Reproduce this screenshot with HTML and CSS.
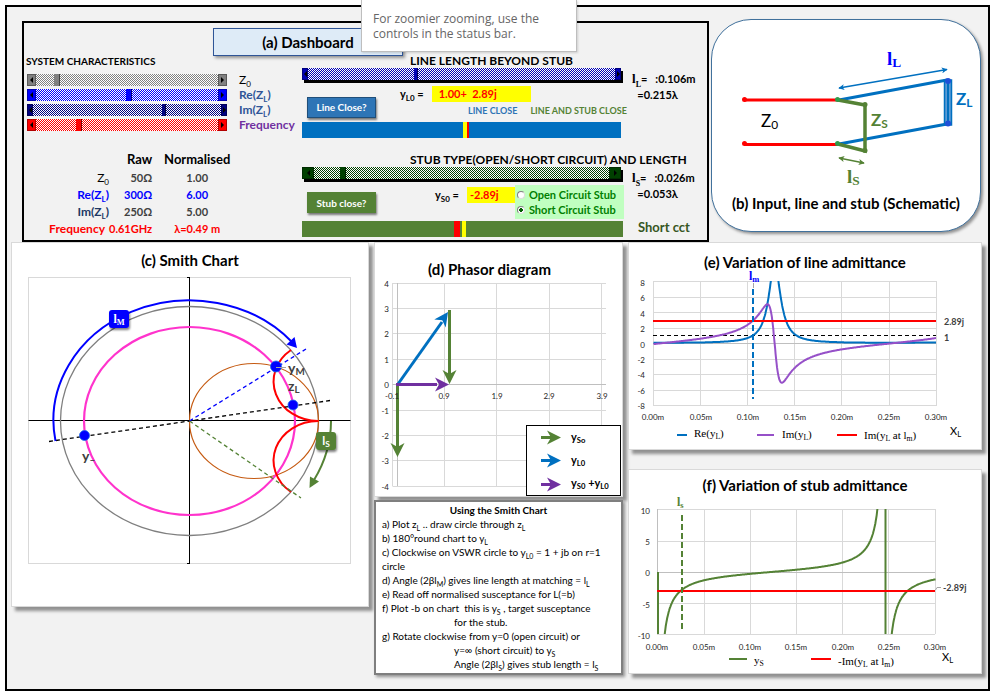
FILE: index.html
```html
<!DOCTYPE html>
<html lang="en">

<head>
	<meta charset="UTF-8">
	<meta name="viewport" content="width=device-width, initial-scale=1.0">
	<title>Single stub matching</title>
	<link rel="stylesheet" href="styles.css">
</head>

<body>
	<div class="tooltip" role="tooltip">For zoomier zooming, use the controls in the status bar.</div>

	<main class="sheet">
		<div class="top-row">
			<section class="dashboard">
				<h1 class="dash-title">(a) Dashboard</h1>
				<div class="dash-body">
					<div class="system">
						<h2 class="dash-heading">SYSTEM CHARACTERISTICS</h2>
						<div class="slider-row">
							<div class="scrollbar grey">
								<button class="arrow left" aria-label="Decrease Z0"></button>
								<input type="range" id="z0" min="0" max="100" value="10">
								<button class="arrow right" aria-label="Increase Z0"></button>
							</div>
							<label for="z0" class="black">Z<sub>0</sub></label>
						</div>
						<div class="slider-row">
							<div class="scrollbar blue">
								<button class="arrow left" aria-label="Decrease Re ZL"></button>
								<input type="range" id="re" min="0" max="100" value="51">
								<button class="arrow right" aria-label="Increase Re ZL"></button>
							</div>
							<label for="re" class="steel">Re(Z<sub>L</sub>)</label>
						</div>
						<div class="slider-row">
							<div class="scrollbar navy">
								<button class="arrow left" aria-label="Decrease Im ZL"></button>
								<input type="range" id="im" min="0" max="100" value="70">
								<button class="arrow right" aria-label="Increase Im ZL"></button>
							</div>
							<label for="im" class="steel">Im(Z<sub>L</sub>)</label>
						</div>
						<div class="slider-row">
							<div class="scrollbar red">
								<button class="arrow left" aria-label="Decrease frequency"></button>
								<input type="range" id="freq" min="0" max="100" value="23">
								<button class="arrow right" aria-label="Increase frequency"></button>
							</div>
							<label for="freq" class="purple">Frequency</label>
						</div>

						<table class="values">
							<thead>
								<tr><td></td><th>Raw</th><th>Normalised</th></tr>
							</thead>
							<tbody>
								<tr><th class="black">Z<sub>0</sub></th><td>50Ω</td><td>1.00</td></tr>
								<tr class="row-blue"><th>Re(Z<sub>L</sub>)</th><td>300Ω</td><td>6.00</td></tr>
								<tr><th class="slate">Im(Z<sub>L</sub>)</th><td>250Ω</td><td>5.00</td></tr>
								<tr class="row-red"><th>Frequency</th><td>0.61GHz</td><td>λ=0.49 m</td></tr>
							</tbody>
						</table>
					</div>

					<div class="lengths">
						<div class="block">
							<h2 class="dash-heading indent">LINE LENGTH BEYOND STUB</h2>
							<div class="block-grid">
								<div class="block-main">
									<div class="scrollbar line-bar">
										<button class="arrow left" aria-label="Shorter line"></button>
										<input type="range" aria-label="Line length" min="0" max="100" value="35">
										<button class="arrow right" aria-label="Longer line"></button>
									</div>
									<div class="readout">
										<button class="check check-line">Line Close?</button>
										<div class="readout-info">
											<p class="value-row line-value"><span>y<sub>L0</sub> =</span> <output class="yellow wide">1.00+&nbsp; 2.89j</output></p>
											<p class="states"><span class="state-line">LINE CLOSE</span><span class="state-stub">LINE AND STUB CLOSE</span></p>
										</div>
									</div>
									<div class="gauge gauge-line"></div>
								</div>
								<div class="block-side">
									<p><span class="serif">l<sub>L</sub></span>= &nbsp; :0.106m</p>
									<p>&nbsp; =0.215λ</p>
								</div>
							</div>
						</div>

						<div class="block">
							<h2 class="dash-heading indent">STUB TYPE(OPEN/SHORT CIRCUIT) AND LENGTH</h2>
							<div class="block-grid">
								<div class="block-main">
									<div class="scrollbar stub-bar">
										<button class="arrow left" aria-label="Shorter stub"></button>
										<input type="range" aria-label="Stub length" min="0" max="100" value="9">
										<button class="arrow right" aria-label="Longer stub"></button>
									</div>
									<div class="readout">
										<button class="check check-stub">Stub close?</button>
										<p class="value-row stub-value"><span>y<sub>S0</sub> =</span> <output class="yellow">-2.89j</output></p>
										<div class="stub-type">
											<label><input type="radio" name="stub">Open Circuit Stub</label>
											<label><input type="radio" name="stub" checked>Short Circuit Stub</label>
										</div>
									</div>
									<div class="gauge gauge-stub"></div>
								</div>
								<div class="block-side">
									<p><span class="serif">l<sub>S</sub></span>= &nbsp; :0.026m</p>
									<p>&nbsp; =0.053λ</p>
									<p class="stub-kind">Short cct</p>
								</div>
							</div>
						</div>
					</div>
				</div>
			</section>

			<section class="schematic">
				<svg viewBox="712 20 268 170">
					<defs>
						<marker id="tipBlue" viewBox="0 0 8 8" refX="7" refY="4" markerWidth="4" markerHeight="4" orient="auto-start-reverse"><path d="M0 0L8 4L0 8L2 4z" fill="#0070c0"/></marker>
						<marker id="tipGreen" viewBox="0 0 8 8" refX="7" refY="4" markerWidth="4" markerHeight="4" orient="auto-start-reverse"><path d="M0 0L8 4L0 8L2 4z" fill="#548235"/></marker>
					</defs>
					<g fill="none" stroke-width="3">
						<path d="M744 100H838M744 144.500H838" stroke="#f00"/>
						<path d="M839 100L947 80M839 144L947 124" stroke="#0070c0"/>
						<path d="M838 100L865 105V151L838 144" stroke="#548235" stroke-width="3.500"/>
					</g>
					<g fill="#f00"><circle cx="744.500" cy="99.500" r="2.500"/><circle cx="744.500" cy="143.500" r="2.500"/></g>
					<g fill="#2e9b4a"><circle cx="837.500" cy="99.500" r="2.500"/><circle cx="837.500" cy="143.500" r="2.500"/></g>
					<g fill="#548235"><circle cx="865" cy="104.500" r="2.500"/><circle cx="865" cy="150.500" r="2.500"/></g>
					<rect x="944.500" y="80" width="7" height="45" fill="#5b9bd5" stroke="#0070c0" stroke-width="1.500"/>
					<path d="M948 80V125" stroke="#0070c0" stroke-width="2"/>
					<g fill="#1f4fd8"><circle cx="948" cy="81" r="3"/><circle cx="948" cy="123.500" r="3"/></g>
					<path d="M839 88L947 69.500" stroke="#0070c0" stroke-width="1.500" marker-start="url(#tipBlue)" marker-end="url(#tipBlue)"/>
					<path d="M839 158L864 163" stroke="#548235" stroke-width="1.500" marker-start="url(#tipGreen)" marker-end="url(#tipGreen)"/>
					<g class="sketch-label">
						<text x="761" y="127">Z<tspan class="sub">0</tspan></text>
						<text x="871" y="126" class="bold" fill="#548235">Z<tspan class="sub">S</tspan></text>
						<text x="956" y="105" class="bold" fill="#0070c0">Z<tspan class="sub">L</tspan></text>
						<text x="887" y="65" class="bold serif" fill="#00f">l<tspan class="sub">L</tspan></text>
						<text x="847" y="183" class="bold serif" fill="#548235">l<tspan class="sub">S</tspan></text>
					</g>
				</svg>
				<h2>(b) Input, line and stub (Schematic)</h2>
			</section>
		</div>

		<div class="bottom-row">
			<section class="card smith">
				<h2>(c) Smith Chart</h2>
				<svg viewBox="12 269 356 337">
					<defs>
						<filter id="drop" x="-20%" y="-20%" width="160%" height="160%"><feDropShadow dx="1" dy="2" stdDeviation="1" flood-opacity=".5"/></filter>
					</defs>
					<rect x="28.500" y="277.500" width="322" height="286" fill="#fff" stroke="#d9d9d9"/>
					<path d="M28.500 420.500H350.500M189.500 277.500V563.500M187 277.500h3M187 563.500h3" stroke="#000" fill="none"/>
					<g fill="none">
						<ellipse cx="189.500" cy="421" rx="129" ry="114.500" stroke="#7f7f7f" stroke-width="1.300"/>
						<ellipse cx="254" cy="421" rx="64.500" ry="57.500" stroke="#c55a11" stroke-width="1.200"/>
						<ellipse cx="189.500" cy="421" rx="105.500" ry="94" stroke="#f3c" stroke-width="2.200"/>
						<path d="M318.500 421A44.600 39.600 0 0 1 291 350M318.500 421A44.600 39.600 0 0 0 291 492" stroke="#f00" stroke-width="2"/>
						<path d="M49 441.500L189.500 421L330 400.500" stroke="#000" stroke-width="1.300" stroke-dasharray="4 3"/>
						<path d="M189.500 421L306 349" stroke="#00f" stroke-width="1.300" stroke-dasharray="4 3"/>
						<path d="M189.500 421L301 498" stroke="#548235" stroke-width="1.300" stroke-dasharray="4 3"/>
						<path d="M55.500 441A135.700 120 0 0 1 292 342" stroke="#00f" stroke-width="2"/>
						<path d="M331 421A141.500 125 0 0 1 314 480" stroke="#548235" stroke-width="2"/>
					</g>
					<path d="M297 348L286.500 344.500L294.500 337z" fill="#00f"/>
					<path d="M309.500 488L310 476.500L319 481.500z" fill="#548235"/>
					<g fill="#00f" stroke="#1c6fe8" stroke-width=".8">
						<circle cx="84.500" cy="435.500" r="5"/><circle cx="276" cy="366.500" r="5.500"/><circle cx="293" cy="405" r="5"/>
					</g>
					<path d="M276 367.500H286" stroke="#a6a6a6"/>
					<g class="point-label">
						<text x="288" y="373">y<tspan class="sub">M</tspan></text>
						<text x="288" y="391">z<tspan class="sub">L</tspan></text>
						<text x="82" y="461">y<tspan class="sub">–</tspan></text>
					</g>
					<g filter="url(#drop)">
						<rect x="109" y="310" width="20" height="18" rx="3" fill="#00f"/>
						<rect x="316" y="432" width="20" height="18" rx="3" fill="#548235"/>
					</g>
					<text x="119" y="323" class="serif badge">l<tspan class="sub">M</tspan></text>
					<text x="326" y="445" class="badge">l<tspan class="sub">S</tspan></text>
				</svg>
			</section>

			<div class="column">
				<section class="card phasor">
					<h2>(d) Phasor diagram</h2>
					<svg viewBox="375 278 247 218">
						<path d="M392.500 283.500H606M392.500 308.500H606M392.500 333.500H606M392.500 359.500H606M392.500 410.500H606M392.500 435.500H606M392.500 460.500H606M392.500 486.500H606M392.500 283V486M444.500 283V486M496.500 283V486M549.500 283V486M601.500 283V486" stroke="#d9d9d9"/>
						<path d="M392.500 384.500H606M397.500 283V486" stroke="#bfbfbf"/>
						<g class="tick end">
							<text x="389" y="287">4</text><text x="389" y="312">3</text><text x="389" y="337">2</text><text x="389" y="363">1</text><text x="389" y="388">0</text><text x="389" y="414">-1</text><text x="389" y="439">-2</text><text x="389" y="464">-3</text><text x="389" y="490">-4</text>
						</g>
						<defs><path id="head" d="M0 0L-14 -7L-10 0L-14 7z"/></defs>
						<g fill="none" stroke-width="3">
							<path d="M397.500 384V447M449.500 310V375" stroke="#548235"/>
							<path d="M398 384L442 322" stroke="#0070c0"/>
							<path d="M396 384.500H437" stroke="#7030a0"/>
						</g>
						<use href="#head" transform="translate(397.500 457) rotate(90)" fill="#548235"/>
						<use href="#head" transform="translate(449.500 384) rotate(90)" fill="#548235"/>
						<use href="#head" transform="translate(448 312) rotate(-55)" fill="#0070c0"/>
						<use href="#head" transform="translate(449 384.500)" fill="#7030a0"/>
						<g class="tick mid">
							<text x="392" y="399">-0.1</text><text x="444" y="399">0.9</text><text x="497" y="399">1.9</text><text x="549" y="399">2.9</text><text x="602" y="399">3.9</text>
						</g>
						<rect x="526.500" y="425.500" width="94" height="70" fill="#fff" stroke="#000"/>
						<g stroke-width="3"><path d="M541 437.500H551" stroke="#548235"/><path d="M541 460.500H551" stroke="#0070c0"/><path d="M541 484.500H551" stroke="#7030a0"/></g>
						<use href="#head" x="561" y="437.500" fill="#548235"/>
						<use href="#head" x="561" y="460.500" fill="#0070c0"/>
						<use href="#head" x="561" y="484.500" fill="#7030a0"/>
						<g class="legend-bold">
							<text x="571" y="441">y<tspan class="sub">So</tspan></text>
							<text x="571" y="464">y<tspan class="sub">L0</tspan></text>
							<text x="571" y="487">y<tspan class="sub">S0</tspan> +y<tspan class="sub">L0</tspan></text>
						</g>
					</svg>
				</section>

				<section class="notes">
					<h2>Using the Smith Chart</h2>
					<p>a) Plot z<sub>L</sub> .. draw circle through z<sub>L</sub></p>
					<p>b) 180°round chart to y<sub>L</sub></p>
					<p>c) Clockwise on VSWR circle to y<sub>L0</sub> = 1 + jb on r=1 circle</p>
					<p>d) Angle (2βl<sub>M</sub>) gives line length at matching = l<sub>L</sub></p>
					<p>e) Read off normalised susceptance for L(=b)</p>
					<p>f) Plot -b on chart&nbsp; this is y<sub>S</sub> , target susceptance</p>
					<p class="tab">for the stub.</p>
					<p>g) Rotate clockwise from y=0 (open circuit) or</p>
					<p class="tab">y=∞ (short circuit) to y<sub>S</sub></p>
					<p class="tab">Angle (2βl<sub>S</sub>) gives stub length = l<sub>S</sub></p>
				</section>
			</div>

			<div class="column charts">
				<section class="card line-chart">
					<h2>(e) Variation of line admittance</h2>
					<svg viewBox="629 271 352 178">
						<clipPath id="lineClip"><rect x="653" y="281" width="283" height="125"/></clipPath>
						<path d="M653 281.500H936M653 297.500H936M653 312.500H936M653 328.500H936M653 359.500H936M653 374.500H936M653 390.500H936M653 405.500H936M653.500 281V406M700.500 281V406M747.500 281V406M794.500 281V406M841.500 281V406M889.500 281V406M936.500 281V406" stroke="#d9d9d9"/>
						<path d="M653 343.500H936" stroke="#bfbfbf"/>
						<g class="tick end">
							<text x="645" y="286">8</text><text x="645" y="301">6</text><text x="645" y="317">4</text><text x="645" y="332">2</text><text x="645" y="348">0</text><text x="645" y="363">-2</text><text x="645" y="378">-4</text><text x="645" y="394">-6</text><text x="645" y="409">-8</text>
						</g>
						<g class="tick mid">
							<text x="653" y="420">0.00m</text><text x="701" y="420">0.05m</text><text x="748" y="420">0.10m</text><text x="795" y="420">0.15m</text><text x="842" y="420">0.20m</text><text x="889" y="420">0.25m</text><text x="936" y="420">0.30m</text>
						</g>
						<path d="M653 335.500H936" stroke="#000" stroke-dasharray="4 3"/>
						<g clip-path="url(#lineClip)" fill="none" stroke-width="2">
							<path id="reLine" stroke="#0070c0"/>
							<path id="imLine" stroke="#9650c8"/>
						</g>
						<path d="M653 321H936" stroke="#f00" stroke-width="2"/>
						<path d="M753 289V399" stroke="#0070c0" stroke-width="2" stroke-dasharray="6 3"/>
						<path d="M753.500 283V288" stroke="#a6a6a6"/>
						<text x="749" y="280" class="serif mark" fill="#00f">l<tspan class="sub">m</tspan></text>
						<g class="side"><text x="944" y="325">2.89j</text><text x="944" y="341">1</text></g>
						<g stroke-width="2"><path d="M677 435H687" stroke="#0070c0"/><path d="M757 435H774" stroke="#9650c8"/><path d="M837 435H857" stroke="#f00"/></g>
						<g class="serif legend">
							<text x="694" y="437">Re(y<tspan class="sub">L</tspan>)</text>
							<text x="782" y="438">Im(y<tspan class="sub">L</tspan>)</text>
							<text x="864" y="439">Im(y<tspan class="sub">L</tspan> at l<tspan class="sub">m</tspan>)</text>
						</g>
						<text x="950" y="435" class="axis-name">X<tspan class="sub">L</tspan></text>
					</svg>
				</section>

				<section class="card stub-chart">
					<h2>(f) Variation of stub admittance</h2>
					<svg viewBox="629 494 352 179">
						<clipPath id="stubClip"><rect x="656" y="509" width="280" height="125"/></clipPath>
						<path d="M657 509.500H935M657 541.500H935M657 603.500H935M657 634.500H935M657.500 509V634M704.500 509V634M750.500 509V634M796.500 509V634M842.500 509V634M888.500 509V634M935.500 509V634" stroke="#d9d9d9"/>
						<path d="M657 572.500H935M657.500 509V634" stroke="#bfbfbf"/>
						<g class="tick end">
							<text x="650" y="514">10</text><text x="650" y="545">5</text><text x="650" y="576">0</text><text x="650" y="608">-5</text><text x="650" y="639">-10</text>
						</g>
						<g class="tick mid">
							<text x="657" y="650">0.00m</text><text x="704" y="650">0.05m</text><text x="750" y="650">0.10m</text><text x="796" y="650">0.15m</text><text x="843" y="650">0.20m</text><text x="889" y="650">0.25m</text><text x="935" y="650">0.30m</text>
						</g>
						<g clip-path="url(#stubClip)" fill="none" stroke="#548235" stroke-width="2">
							<path id="stubLine"/>
							<path d="M658 572V634M885.500 509V634"/>
						</g>
						<path d="M657 591H935" stroke="#f00" stroke-width="2"/>
						<path d="M682 515V630" stroke="#548235" stroke-width="2" stroke-dasharray="6 3"/>
						<path d="M935.500 590L937 587.500H941" stroke="#a6a6a6" fill="none"/>
						<text x="677" y="506" class="serif mark" fill="#548235">l<tspan class="sub">s</tspan></text>
						<g class="side"><text x="943" y="591">-2.89j</text></g>
						<g stroke-width="2"><path d="M729 659H747" stroke="#548235"/><path d="M811 659H831" stroke="#f00"/></g>
						<g class="serif legend">
							<text x="754" y="664">y<tspan class="sub">S</tspan></text>
							<text x="838" y="665">-Im(y<tspan class="sub">L</tspan> at l<tspan class="sub">m</tspan>)</text>
						</g>
						<text x="942" y="661" class="axis-name">X<tspan class="sub">L</tspan></text>
					</svg>
				</section>
			</div>
		</div>
	</main>

	<script src="charts.js"></script>
</body>

</html>
```

FILE: styles.css
```css
* {
	box-sizing: border-box;
}

body {
	margin: 0;
	background-color: #fff;
	font-family: Lato, Roboto, sans-serif;
	font-size: 12px;
	color: #000;
}

h1, h2, p {
	margin: 0;
}

sub {
	font-size: 8px;
	line-height: 0;
}

svg {
	display: block;
	width: 100%;
	overflow: visible;
	font-family: Lato, Roboto, sans-serif;
}

.sub {
	font-size: 70%;
	baseline-shift: -2px;
}

.serif {
	font-family: "Liberation Serif", serif;
}

.bold {
	font-weight: bold;
}

.tooltip {
	position: absolute;
	top: 0;
	left: 361px;
	width: 216px;
	padding: 11px 12px 10px 11px;
	border: 1px solid #bebebe;
	border-top: none;
	background-color: #fff;
	box-shadow: 1px 1px 2px rgba(0, 0, 0, 0.15);
	font-family: "Open Sans", "Noto Sans", sans-serif;
	font-size: 12px;
	line-height: 15px;
	color: #666;
	z-index: 10;
}

.sheet {
	min-height: calc(100vh - 12px);
	margin: 5px 8px 7px 5px;
	padding: 12px 6px 10px 4px;
	border: 2px solid #000;
	background-color: #f2f2f2;
}

.top-row {
	display: grid;
	grid-template-columns: 687fr 270fr;
	gap: 2px;
	align-items: start;
	padding: 0 1px 0 11px;
}

/* dashboard */
.dashboard {
	margin-top: 2px;
	border: 2px solid #000;
}

.dash-title {
	width: 190px;
	height: 28px;
	margin: 5px 0 -2px 189px;
	border: 1px solid #2f5597;
	background-color: #deebf7;
	box-shadow: 2px 2px 3px rgba(0, 0, 0, 0.4);
	font-size: 15px;
	line-height: 26px;
	text-align: center;
}

.dash-body {
	display: grid;
	grid-template-columns: 275px 1fr;
	gap: 3px;
	padding-bottom: 3px;
}

.dash-heading {
	height: 14px;
	padding-left: 2px;
	font-size: 12px;
	line-height: 14px;
	white-space: nowrap;
}

.indent {
	padding-left: 108px;
}

.system .dash-heading {
	margin-bottom: 4px;
	font-size: 10px;
}

.slider-row {
	display: flex;
	align-items: center;
	gap: 12px;
	height: 15px;
	padding-left: 3px;
	font-weight: bold;
	line-height: 15px;
}

.slider-row .scrollbar {
	width: 200px;
}

.scrollbar {
	--c: #808080;
	--btn: 9px;
	--thumb: 6px;
	display: flex;
	height: 12px;
	background: repeating-conic-gradient(var(--c) 0 25%, #fff 0 50%) 0 0 / 2px 2px;
}

.scrollbar.blue {
	--c: #00f;
}

.scrollbar.navy {
	--c: #000080;
	--btn: 6px;
	--thumb: 4px;
}

.scrollbar.red {
	--c: #f00;
}

.scrollbar.line-bar {
	--c: #0000b4;
	--btn: 6px;
	--thumb: 4px;
}

.scrollbar.stub-bar {
	--c: #004000;
	--btn: 12px;
}

.line-bar, .stub-bar {
	width: 319px;
	box-shadow: 2px 3px 0 #000;
}

.scrollbar input {
	-webkit-appearance: none;
	appearance: none;
	flex: 1;
	min-width: 0;
	height: 12px;
	margin: 0;
	background: transparent;
}

.scrollbar input::-webkit-slider-thumb {
	-webkit-appearance: none;
	width: var(--thumb);
	height: 12px;
	border-right: 1px solid rgba(0, 0, 0, 0.5);
	background-color: var(--c);
}

.arrow {
	display: flex;
	align-items: center;
	justify-content: center;
	width: var(--btn);
	height: 12px;
	padding: 0;
	border: 1px solid rgba(0, 0, 0, 0.3);
	background-color: var(--c);
}

.arrow::before {
	content: "";
	border: 3px solid transparent;
	border-left-width: 0;
	border-right-color: #000;
}

.arrow.right::before {
	border-width: 3px 0 3px 3px;
	border-left-color: #000;
}

.black {
	font-weight: normal;
	color: #000;
}

.steel {
	color: #2f5597;
}

.slate {
	color: #203864;
}

.purple {
	color: #7030a0;
}

.values {
	margin-top: 17px;
	border-collapse: collapse;
	font-weight: bold;
	color: #404040;
}

.values th, .values td {
	height: 17px;
	padding: 0;
	line-height: 16px;
	text-align: right;
}

.values td:last-child, .values th:last-child {
	width: 90px;
	text-align: center;
}

.values td:nth-child(2), .values thead th:nth-child(2) {
	width: 43px;
}

.values th:first-child {
	width: 85px;
}

.values tbody td {
	font-size: 11px;
}

.values thead th {
	height: 20px;
	font-size: 13px;
	color: #000;
}

.values .row-blue {
	color: #00f;
}

.values .row-red {
	color: #f00;
}

.values .row-red th {
	padding-right: 4px;
}

/* line and stub length blocks */
.lengths {
	display: flex;
	flex-direction: column;
	gap: 15px;
}

.block-grid {
	display: grid;
	grid-template-columns: 322px 1fr;
	gap: 6px;
}

.readout {
	display: flex;
	align-items: center;
	height: 42px;
	padding-left: 5px;
}

.check {
	flex: none;
	width: 69px;
	height: 21px;
	padding: 0;
	border: 1px solid #1f4e79;
	background-color: #2e75b6;
	box-shadow: 1px 2px 2px rgba(0, 0, 0, 0.5);
	font-family: inherit;
	font-size: 10px;
	font-weight: bold;
	color: #fff;
}

.check-line {
	margin-top: 12px;
}

.check-stub {
	margin-top: 5px;
	border-color: #548235;
	background-color: #548235;
}

.readout-info {
	padding-top: 4px;
}

.value-row {
	display: flex;
	gap: 8px;
	font-size: 11px;
	font-weight: bold;
	line-height: 16px;
}

.line-value {
	padding-left: 24px;
}

.stub-value {
	margin: 0 0 10px 59px;
}

.yellow {
	width: 48px;
	padding-left: 3px;
	background-color: #ff0;
	color: #f00;
}

.yellow.wide {
	width: 99px;
	padding-left: 7px;
}

.states {
	display: flex;
	gap: 13px;
	padding-left: 92px;
	font-size: 9px;
	font-weight: bold;
	line-height: 18px;
	white-space: nowrap;
}

.state-line {
	color: #2e75b6;
}

.state-stub {
	color: #548235;
}

.stub-type {
	flex: 1;
	margin-top: 4px;
	padding: 2px 0;
	background-color: #c0ffc0;
	font-size: 11px;
	font-weight: bold;
	line-height: 15px;
	color: #008000;
	white-space: nowrap;
}

.stub-type label {
	display: flex;
	align-items: center;
	gap: 4px;
}

.stub-type input {
	-webkit-appearance: none;
	appearance: none;
	width: 8px;
	height: 8px;
	margin: 0 0 0 2px;
	border: 1px solid #808080;
	border-right-color: #ddd;
	border-bottom-color: #ddd;
	border-radius: 50%;
	background-color: #fff;
}

.stub-type input:checked {
	background-image: radial-gradient(#006000 0 2px, #fff 2px);
}

.gauge {
	width: 319px;
	height: 16px;
}

.gauge-line {
	background: linear-gradient(90deg, #0070c0 161px, #ff0 161px 165px, #f00 165px 167px, #0070c0 167px);
}

.gauge-stub {
	width: 321px;
	background: linear-gradient(90deg, #548235 152px, #f00 152px 158px, #548235 158px 160px, #ff0 160px 164px, #548235 164px);
}

.block-side {
	padding: 3px 0 0 2px;
	font-size: 11px;
	font-weight: bold;
	line-height: 16px;
}

.block-side .serif {
	font-size: 13px;
}

.stub-kind {
	padding: 17px 0 0 6px;
	font-size: 13px;
	color: #375623;
}

/* schematic */
.schematic {
	padding-bottom: 15px;
	border: 1px solid #41719c;
	border-radius: 40px;
	background-color: #fff;
	box-shadow: 2px 2px 3px rgba(0, 0, 0, 0.4);
}

.schematic h2 {
	font-size: 15px;
	line-height: 26px;
	text-align: center;
}

.sketch-label text {
	font-size: 17px;
}

.sketch-label .serif {
	font-size: 19px;
}

/* charts */
.bottom-row {
	display: grid;
	grid-template-columns: 358fr 249fr 354fr;
	gap: 5px;
	align-items: start;
}

.column {
	display: flex;
	flex-direction: column;
	gap: 3px;
}

.charts {
	gap: 19px;
}

.card {
	border: 1px solid #d9d9d9;
	background-color: #fff;
	box-shadow: 4px 4px 3px rgba(0, 0, 0, 0.4);
}

.card h2 {
	padding-top: 8px;
	font-size: 15px;
	line-height: 18px;
	text-align: center;
}

.phasor h2 {
	padding: 17px 18px 0 0;
}

.line-chart h2 {
	padding-top: 10px;
}

.stub-chart h2 {
	padding-top: 6px;
}

.tick {
	font-size: 8px;
	fill: #262626;
}

.end {
	text-anchor: end;
}

.mid {
	text-anchor: middle;
}

.point-label {
	font-size: 14px;
	font-weight: bold;
	fill: #404040;
}

.badge {
	font-size: 12px;
	font-weight: bold;
	fill: #fff;
	text-anchor: middle;
}

.legend-bold {
	font-size: 11px;
	font-weight: bold;
}

.legend {
	font-size: 11px;
}

.mark {
	font-size: 12px;
	font-weight: bold;
}

.side {
	font-size: 9px;
	font-weight: bold;
	fill: #404040;
}

.axis-name {
	font-size: 11px;
}

/* instructions */
.notes {
	padding: 2px 6px;
	border: 2px solid #7f7f7f;
	background-color: #fff;
	box-shadow: 2px 2px 3px rgba(0, 0, 0, 0.4);
	font-size: 10px;
	line-height: 14px;
}

.notes sub {
	font-size: 7px;
}

.notes h2 {
	font-size: 10px;
	line-height: 13px;
	text-align: center;
}

.notes .tab {
	padding-left: 72px;
}
```

FILE: charts.js
```js
const wavelength = 0.49;
const beta = 2 * Math.PI / wavelength;

// normalised load admittance, 1 / (6 + 5j)
const yLoad = { re: 6 / 61, im: -5 / 61 };

// admittance seen x metres back from the load
function lineAdmittance(x) {
	const t = Math.tan(beta * x);
	const a = yLoad.re;
	const b = yLoad.im + t;
	const c = 1 - yLoad.im * t;
	const d = yLoad.re * t;
	const m = c * c + d * d;
	return { re: (a * c + b * d) / m, im: (b * c - a * d) / m };
}

// short circuit stub
function stubAdmittance(x) {
	return -1 / Math.tan(beta * x);
}

function plot(id, fn, left, width, zeroY, unit, limit) {
	let d = "";
	let pen = "M";
	for (let i = 1; i <= 600; i++) {
		const x = i * 0.0005;
		const y = fn(x);
		if (Math.abs(y) > limit) {
			pen = "M";
			continue;
		}
		d += pen + (left + x / 0.3 * width).toFixed(1) + " " + (zeroY - y * unit).toFixed(1);
		pen = "L";
	}
	document.getElementById(id).setAttribute("d", d);
}

plot("reLine", x => lineAdmittance(x).re, 653, 283, 343.5, 7.74, 12);
plot("imLine", x => lineAdmittance(x).im, 653, 283, 343.5, 7.74, 12);
plot("stubLine", stubAdmittance, 657.5, 278, 572, 6.23, 14);
```
